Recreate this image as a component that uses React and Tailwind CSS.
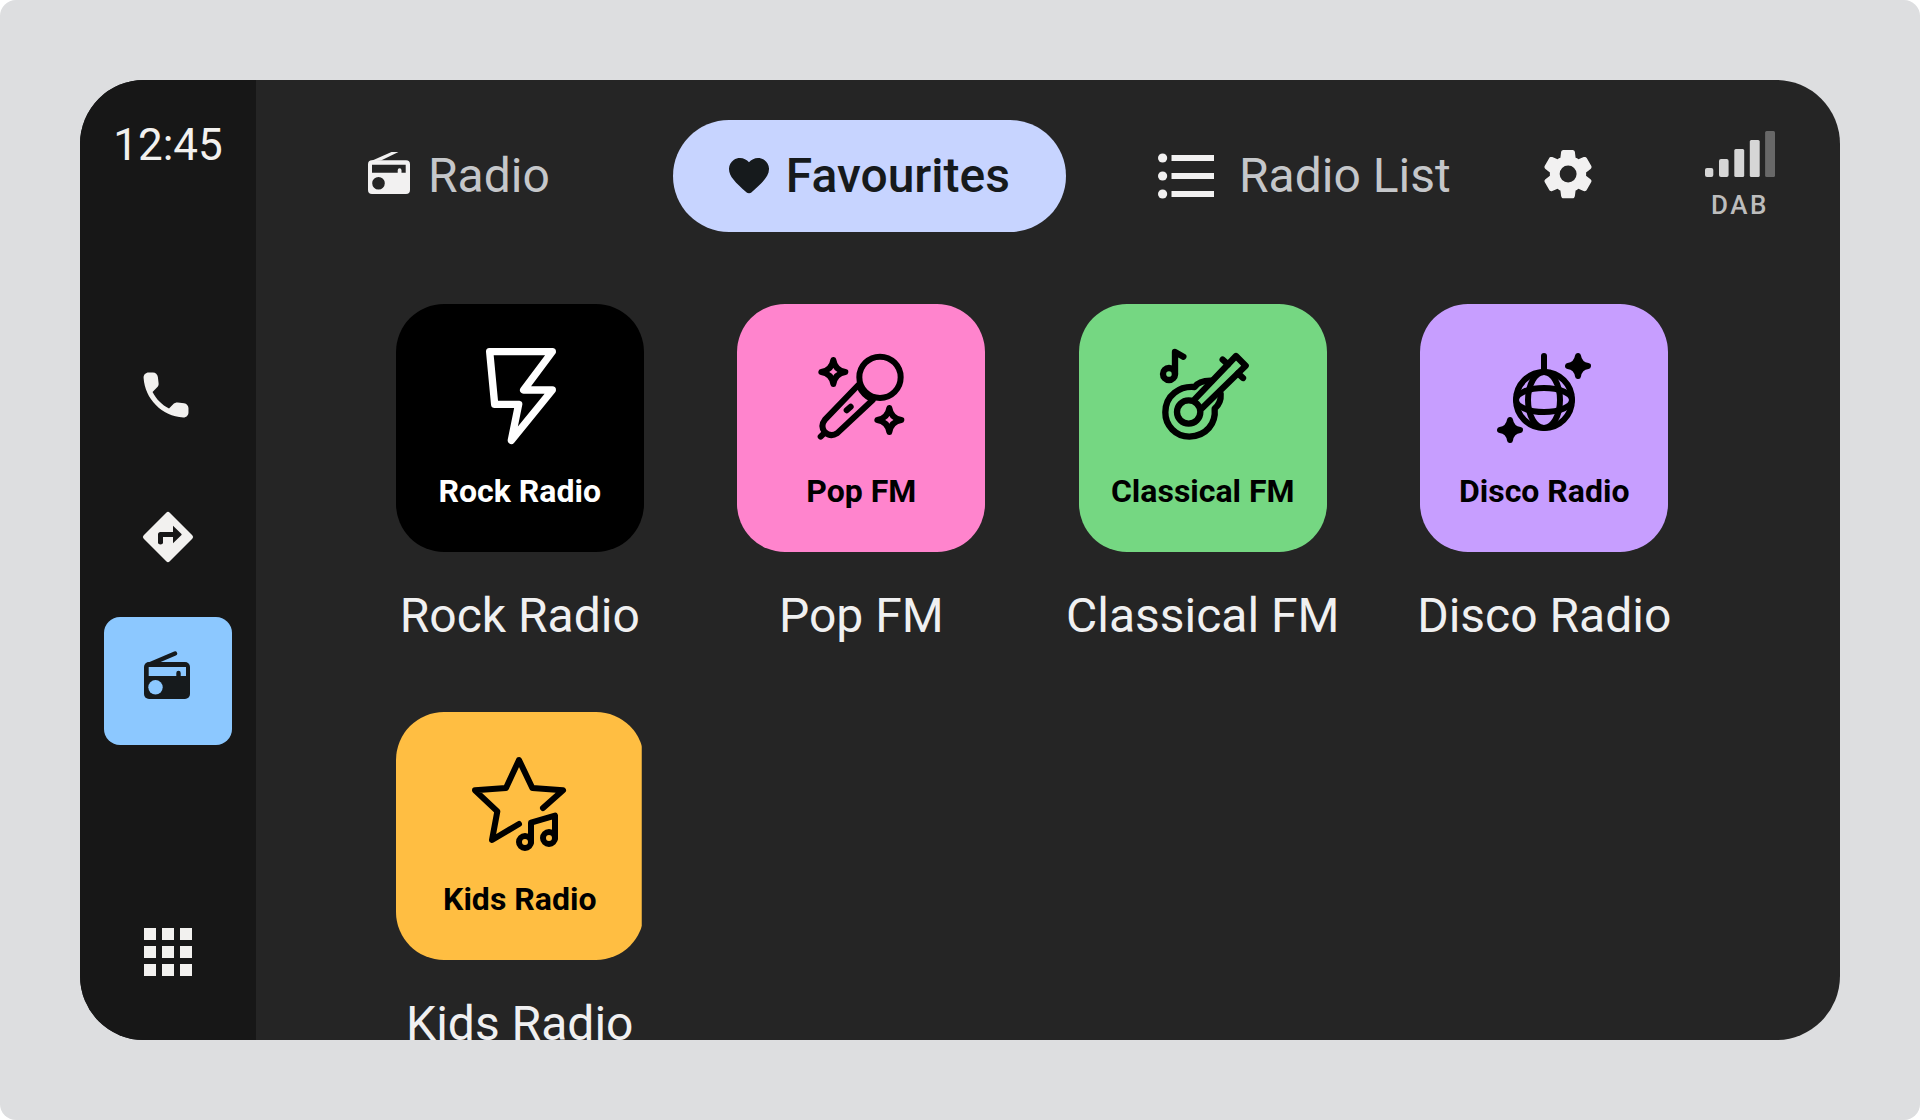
import { useState } from 'react';

const INK = '#161a1c';

function CallIcon() {
  return (
    <svg width="60" height="60" viewBox="0.8 -0.8 24 24" fill="currentColor" aria-hidden="true">
      <path d="M19.23 15.26l-2.54-.29c-.61-.07-1.21.14-1.64.57l-1.84 1.84c-2.83-1.44-5.15-3.75-6.59-6.59l1.85-1.85c.43-.43.64-1.03.57-1.64l-.29-2.52c-.12-1.01-.97-1.77-1.99-1.77H5.03c-1.13 0-2.07.94-2 2.07.53 8.54 7.36 15.36 15.89 15.89 1.13.07 2.07-.87 2.07-2v-1.73c.01-1.01-.75-1.86-1.76-1.98z" />
    </svg>
  );
}

function DirectionsIcon() {
  return (
    <svg width="60" height="60" viewBox="0 0 24 24" fill="currentColor" aria-hidden="true">
      <path
        fillRule="evenodd"
        d="M21.71 11.29l-9-9a1 1 0 0 0-1.42 0l-9 9a1 1 0 0 0 0 1.42l9 9a1 1 0 0 0 1.42 0l9-9a1 1 0 0 0 0-1.42zM14 14.5V12h-4v2.3a1 .7 0 0 1-2 0V11a1 1 0 0 1 1-1h5V7.5l3.3 3.15c.2.2.2.5 0 .7L14 14.5z"
      />
    </svg>
  );
}

function CarRadioIcon() {
  return (
    <svg width="60" height="60" viewBox="-6 0 60 60" aria-hidden="true">
      <path d="M4 14L31 2.5" stroke={INK} strokeWidth="4.4" strokeLinecap="round" />
      <rect x="0" y="11" width="46" height="37" rx="5" fill={INK} />
      <path d="M4.7 16H42v9h-5.3v-3a2.2 2.2 0 0 0-4.4 0v3H4.7z" fill="#8cc8ff" />
      <circle cx="11.5" cy="36.3" r="7.2" fill="#8cc8ff" />
    </svg>
  );
}

function AppsIcon() {
  const cells = [0, 18, 36];
  return (
    <svg width="48" height="48" viewBox="0 0 48 48" fill="currentColor" aria-hidden="true">
      {cells.map(y => cells.map(x => <rect key={`${x}-${y}`} x={x} y={y} width="12" height="12" />))}
    </svg>
  );
}

function RadioIcon() {
  return (
    <svg width="52" height="48" viewBox="-5 0 52 48" fill="#f2f1f1" aria-hidden="true">
      <path d="M2 9.5L23.5 0H30.4L13 8.6z" />
      <path
        fillRule="evenodd"
        d="M4 8.3H38a4 4 0 0 1 4 4V38a4 4 0 0 1-4 4H4a4 4 0 0 1-4-4V12.3a4 4 0 0 1 4-4zM4 12.7V20.7H29.7V18.2a1.9 1.9 0 0 1 3.8 0V20.7H37.7V12.7zM10.5 25a6.3 6.3 0 1 0 0 12.6a6.3 6.3 0 0 0 0-12.6z"
      />
    </svg>
  );
}

function HeartIcon() {
  return (
    <svg width="48" height="48" viewBox="0 0 24 24" fill="currentColor" aria-hidden="true">
      <path d="M13.35 20.13c-.76.69-1.93.69-2.69-.01l-.11-.1C5.3 15.27 1.87 12.16 2 8.28c.06-1.7.93-3.33 2.34-4.29 2.64-1.8 5.9-.96 7.66 1.1 1.76-2.06 5.02-2.91 7.66-1.1 1.41.96 2.28 2.59 2.34 4.29.14 3.88-3.3 6.99-8.55 11.76l-.1.09z" />
    </svg>
  );
}

function ListIcon() {
  return (
    <svg width="72" height="48" viewBox="-4 0 72 48" fill="#f2f1f1" aria-hidden="true">
      {[6, 24, 42].map(y => (
        <g key={y}>
          <circle cx="4.6" cy={y} r="4.6" />
          <rect x="13.5" y={y - 3} width="42.5" height="6" />
        </g>
      ))}
    </svg>
  );
}

function GearIcon() {
  return (
    <svg width="58" height="58" viewBox="0 0.8 24 24" fill="currentColor" aria-hidden="true">
      <path d="M13.875 22h-3.75q-.375 0-.65-.25t-.325-.625l-.3-2.325q-.325-.125-.612-.3t-.563-.375l-2.175.9q-.35.125-.7.025t-.55-.425L2.4 15.4q-.2-.325-.125-.7t.375-.6l1.875-1.425Q4.5 12.5 4.5 12.337v-.675q0-.162.025-.337L2.65 9.9q-.3-.225-.375-.6t.125-.7l1.85-3.225q.175-.35.537-.438t.713.038l2.175.9q.275-.2.575-.375t.6-.3l.3-2.325q.05-.375.325-.625t.65-.25h3.75q.375 0 .65.25t.325.625l.3 2.325q.325.125.613.3t.562.375l2.175-.9q.35-.125.7-.025t.55.425L21.6 8.6q.2.325.125.7t-.375.6l-1.875 1.425q.025.175.025.338v.674q0 .163-.05.338l1.875 1.425q.3.225.375.6t-.125.7l-1.85 3.2q-.2.325-.563.438t-.712-.013l-2.125-.9q-.275.2-.575.375t-.6.3l-.3 2.325q-.05.375-.325.625t-.65.25zM12.05 15.5q1.45 0 2.475-1.025T15.55 12t-1.025-2.475T12.05 8.5q-1.475 0-2.487 1.025T8.55 12t1.013 2.475T12.05 15.5z" />
    </svg>
  );
}

function SignalIcon() {
  return (
    <svg width="70" height="46" viewBox="0 0 70 46" fill="#d6d6d6" aria-hidden="true">
      <rect x="0" y="37" width="8.3" height="9" rx="2" />
      <rect x="14" y="28" width="9.6" height="18" rx="2" />
      <rect x="29.3" y="18" width="9.9" height="28" rx="1.5" />
      <rect x="44.8" y="9" width="9.9" height="37" rx="1.5" />
      <rect x="60.1" y="0" width="9.9" height="46" rx="1.5" fill="#686868" />
    </svg>
  );
}

function StationArt({ viewBox, strokeWidth = 18, children }) {
  return (
    <svg
      width="104"
      height="112"
      viewBox={viewBox}
      fill="none"
      stroke="currentColor"
      strokeWidth={strokeWidth}
      strokeLinecap="round"
      strokeLinejoin="round"
      aria-hidden="true"
    >
      {children}
    </svg>
  );
}

function BoltArt() {
  return (
    <StationArt viewBox="264 138 312 336" strokeWidth={22}>
      <path d="M329 185H517L431 300H517L394 451L416 343H344z" />
    </StationArt>
  );
}

function MicArt() {
  return (
    <StationArt viewBox="269 138 312 336">
      <circle cx="482" cy="262" r="62" />
      <path d="M417 285L317 389Q302 408 316 426Q334 443 353 430L460 330" />
      <path d="M419 288Q432 316 458 328" />
      <path d="M382 361L394 350" />
      <path d="M304 440L314 430" />
      <path d="M342 210Q347 241 378 246Q347 251 342 282Q337 251 306 246Q337 241 342 210z" />
      <path d="M510 354Q515 385 546 390Q515 395 510 426Q505 395 474 390Q505 385 510 354z" />
    </StationArt>
  );
}

function GuitarArt() {
  return (
    <StationArt viewBox="273 138 312 336" strokeWidth={19}>
      <path d="M455 272Q418 271 404 291C360 287 316 315 316 367A72 72 0 0 0 388 440C440 438 468 400 464 356Q484 338 482 312" />
      <path d="M404 328L528 198L557 227L426 355" />
      <circle cx="386" cy="366" r="35" />
      <path d="M488 209L504 223M549 264L534 250" />
      <circle cx="327" cy="252" r="18" />
      <path d="M345 252V186L370 200" />
    </StationArt>
  );
}

function DiscoArt() {
  return (
    <StationArt viewBox="276 138 312 336">
      <path d="M432 198V240" />
      <circle cx="432" cy="330" r="84" />
      <ellipse cx="432" cy="330" rx="48" ry="84" />
      <ellipse cx="432" cy="330" rx="84" ry="36" />
      <path fill="currentColor" d="M534 198Q538 224 564 228Q538 232 534 258Q530 232 504 228Q530 224 534 198z" />
      <path fill="currentColor" d="M330 390Q334 416 360 420Q334 424 330 450Q326 424 300 420Q326 416 330 390z" />
    </StationArt>
  );
}

function StarArt() {
  return (
    <StationArt viewBox="264 132 312 336">
      <path d="M489 324L549 271L457 264L417 180L378 264L285 271L352 334L336 420L417 372" />
      <circle cx="435" cy="426" r="18" />
      <circle cx="507" cy="414" r="18" />
      <path d="M453 426V368L525 347V414" />
    </StationArt>
  );
}

const tabs = [
  { id: 'radio', label: 'Radio', Icon: RadioIcon, spacing: '' },
  { id: 'favourites', label: 'Favourites', Icon: HeartIcon, spacing: 'ml-[67px]' },
  { id: 'list', label: 'Radio List', Icon: ListIcon, spacing: 'ml-9' },
];

const sideItems = [
  { id: 'phone', label: 'Phone', Icon: CallIcon },
  { id: 'directions', label: 'Directions', Icon: DirectionsIcon },
  { id: 'media', label: 'Car radio', Icon: CarRadioIcon },
];

const stations = [
  { name: 'Rock Radio', Art: BoltArt, tile: 'bg-black text-white' },
  { name: 'Pop FM', Art: MicArt, tile: 'bg-[#ff84cd] text-black' },
  { name: 'Classical FM', Art: GuitarArt, tile: 'bg-[#75d782] text-black' },
  { name: 'Disco Radio', Art: DiscoArt, tile: 'bg-[#c79eff] text-black' },
  { name: 'Kids Radio', Art: StarArt, tile: 'bg-[#ffbe42] text-black [clip-path:inset(0_2px_0_0)]' },
];

function Sidebar() {
  return (
    <aside className="w-44 shrink-0 bg-[#171717] text-[#f2f1ef] py-6 flex flex-col items-center justify-between">
      <time className="h-[82px] flex items-center text-[44px] leading-[56px]">12:45</time>

      <nav className="flex flex-col gap-4">
        {sideItems.map(({ id, label, Icon }) => (
          <button
            key={id}
            type="button"
            aria-label={label}
            className={`size-32 rounded-2xl flex items-center justify-center ${id === 'media' ? 'bg-[#8cc8ff]' : ''}`}
          >
            <Icon />
          </button>
        ))}
      </nav>

      <button type="button" aria-label="All apps" className="size-32 flex items-center justify-center">
        <AppsIcon />
      </button>
    </aside>
  );
}

function Station({ name, Art, tile }) {
  return (
    <button type="button" className="flex flex-col items-center gap-9">
      <span className={`size-[248px] rounded-[48px] pt-8 flex flex-col items-center ${tile}`}>
        <Art />
        <span className="mt-6 text-[32px] leading-[38px] font-bold">{name}</span>
      </span>
      <span className="text-[48px] leading-[56px] text-[#f0f0f1] whitespace-nowrap">{name}</span>
    </button>
  );
}

export default function App() {
  const [activeTab, setActiveTab] = useState('favourites');

  return (
    <div className="h-screen bg-white font-['Roboto',sans-serif]">
      <div className="h-full rounded-2xl bg-[#dddee0] p-20">
        <div className="h-full flex rounded-[64px] overflow-hidden bg-[#252525]">
          <Sidebar />

          <main className="flex-1 min-w-0 pt-10">
            {/* Tabs and status */}
            <header className="flex items-center h-28 pl-[55px] pr-[65px]">
              {tabs.map(({ id, label, Icon, spacing }) => (
                <button
                  key={id}
                  type="button"
                  onClick={() => setActiveTab(id)}
                  className={`h-28 pl-13 pr-14 rounded-full flex items-center gap-[13px] text-[48px] leading-[56px] whitespace-nowrap ${spacing} ${
                    activeTab === id ? 'bg-[#c7d4ff] text-[#161a1c] font-medium' : 'text-[#c5c7ca]'
                  }`}
                >
                  <Icon />
                  {label}
                </button>
              ))}
              <button type="button" aria-label="Settings" className="ml-8 text-[#f2f1f1]">
                <GearIcon />
              </button>
              <div className="ml-auto flex flex-col items-center gap-3">
                <SignalIcon />
                <span className="text-[26px] leading-8 font-medium tracking-widest text-[#bdbdbd]">DAB</span>
              </div>
            </header>

            {/* Saved stations */}
            <section className="mt-[72px] pl-[93px] pr-[125px] grid grid-cols-4 gap-y-[68px]">
              {stations.map(station => (
                <Station key={station.name} {...station} />
              ))}
            </section>
          </main>
        </div>
      </div>
    </div>
  );
}
